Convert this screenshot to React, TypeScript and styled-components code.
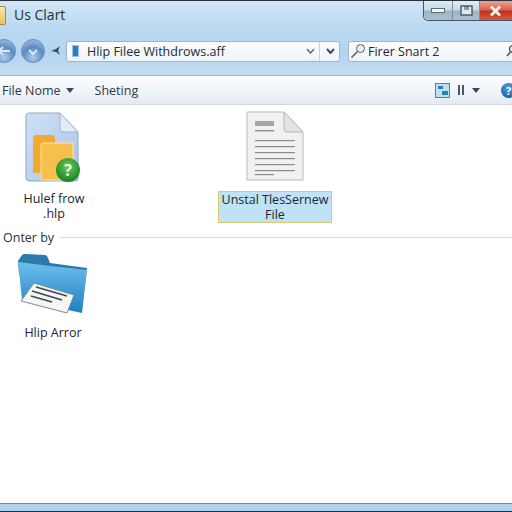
import { createGlobalStyle, styled } from 'styled-components'

const GlobalStyle = createGlobalStyle`
  html, body {
    margin: 0;
    padding: 0;
    height: 100%;
    overflow: hidden;
    background: #fff;
  }
  #root {
    height: 100%;
  }
`

const Win = styled.div`
  width: 512px;
  height: 512px;
  display: flex;
  flex-direction: column;
  overflow: hidden;
  font-family: 'Open Sans', 'Noto Sans', sans-serif;
  color: #1d2530;
  background: #fff;
`

const Frame = styled.div`
  background: linear-gradient(180deg, #d2e5f5 0%, #bcd9f2 35%, #b3d4f1 70%, #c4dcf1 100%);
  border-top: 1px solid #26323b;
  display: flex;
  flex-direction: column;
  box-sizing: border-box;
  height: 75px;
  flex: none;
`

const TitleBar = styled.div`
  height: 37px;
  flex: none;
  display: flex;
  align-items: flex-start;
  justify-content: space-between;
`

const TitleLeft = styled.div`
  display: flex;
  align-items: center;
  gap: 8px;
  height: 27px;
`

const TitleFolder = styled.div`
  width: 5px;
  height: 17px;
  margin-top: 2px;
  background: linear-gradient(180deg, #f6e7a8, #e6c45e);
  border: 1px solid #a58c45;
  border-left: none;
  border-radius: 0 2px 2px 0;
`

const Title = styled.span`
  font-size: 14px;
  color: #26303a;
`

const WinButtons = styled.div`
  display: flex;
  height: 19px;
  border: 1px solid #48565f;
  border-top: none;
  border-right: none;
  border-radius: 0 0 0 5px;
  overflow: hidden;
`

const WinButton = styled.div<{ $w: number; $close?: boolean }>`
  width: ${p => p.$w}px;
  box-sizing: border-box;
  display: flex;
  align-items: center;
  justify-content: center;
  border-right: 1px solid ${p => (p.$close ? 'transparent' : '#7d8f9c')};
  background: ${p =>
    p.$close
      ? 'linear-gradient(180deg, #e9a593 0%, #d9644e 45%, #c3321f 55%, #cf5a3f 100%)'
      : 'linear-gradient(180deg, #e4edf4 0%, #c6d6e3 48%, #9fb4c4 52%, #a9c0d2 100%)'};
`

const NavRow = styled.div`
  height: 26px;
  flex: none;
  display: flex;
  align-items: center;
`

const NavCircle = styled.div<{ $first?: boolean }>`
  width: 24px;
  height: 24px;
  box-sizing: border-box;
  margin-left: ${p => (p.$first ? '-8px' : '5px')};
  border-radius: 50%;
  border: 1px solid #6d8db3;
  flex: none;
  display: flex;
  align-items: center;
  justify-content: center;
  background: radial-gradient(circle at 50% 80%, #a9cdf0 0%, #5a8ac4 50%, #b4cbe4 100%);
`

const HistoryIcon = styled.svg`
  width: 10px;
  height: 10px;
  margin-left: 6px;
  margin-right: 5px;
  flex: none;
`

const Field = styled.div<{ $w: number }>`
  width: ${p => p.$w}px;
  height: 21px;
  flex: none;
  display: flex;
  align-items: center;
  box-sizing: border-box;
  background: linear-gradient(180deg, #fdfefe, #eef4fa);
  border: 1px solid #9fb6ca;
  border-radius: 3px;
  font-size: 12.5px;
  color: #232a33;
`

const AddressIcon = styled.div`
  width: 7px;
  height: 12px;
  box-sizing: border-box;
  margin-left: 5px;
  margin-right: 8px;
  flex: none;
  background: #2d7fc4;
  border: 1px solid #9cc3e3;
`

const FieldText = styled.span`
  flex: 1;
  white-space: nowrap;
`

const Chevron = styled.svg<{ $right: number }>`
  width: 9px;
  height: 6px;
  margin-right: ${p => p.$right}px;
  flex: none;
`

const FieldDivider = styled.div`
  width: 1px;
  height: 19px;
  background: #c4d3e1;
  margin-right: 6px;
`

const SearchField = styled(Field)`
  margin-left: 8px;
  padding-left: 1px;
  gap: 2px;
`

const EndIcon = styled.svg`
  width: 12px;
  height: 14px;
  margin-right: -1px;
  flex: none;
`

const Toolbar = styled.div`
  height: 30px;
  flex: none;
  display: flex;
  align-items: center;
  box-sizing: border-box;
  padding: 0 0 0 2px;
  font-size: 12.5px;
  color: #2f3844;
  border-top: 1px solid #9fb3c4;
  border-bottom: 1px solid #cfd8e2;
  background: linear-gradient(180deg, #fbfcfe 0%, #f1f5fa 50%, #e3eaf3 100%);
`

const ToolItem = styled.span<{ $left?: number }>`
  display: flex;
  align-items: center;
  gap: 5px;
  margin-left: ${p => p.$left ?? 0}px;
`

const Caret = styled.span`
  width: 0;
  height: 0;
  border-left: 4px solid transparent;
  border-right: 4px solid transparent;
  border-top: 5px solid #3b4859;
`

const ToolRight = styled.div`
  margin-left: auto;
  display: flex;
  align-items: center;
`

const ViewIcon = styled.svg`
  width: 15px;
  height: 15px;
`

const Bars = styled.span`
  margin: 0 8px;
  width: 6px;
  height: 10px;
  border-left: 2px solid #4a5868;
  border-right: 2px solid #4a5868;
  box-sizing: border-box;
`

const HelpBadge = styled.span`
  width: 15px;
  height: 15px;
  margin-left: 21px;
  margin-right: -4px;
  border-radius: 50%;
  background: radial-gradient(circle at 50% 30%, #4d9be0, #14569f);
  color: #fff;
  font-size: 11px;
  font-weight: 700;
  display: flex;
  align-items: center;
  justify-content: center;
`

const Content = styled.div`
  flex: 1;
  display: flex;
  flex-direction: column;
  padding-top: 6px;
  background: #fff;
`

const FileRow = styled.div`
  display: flex;
  align-items: flex-start;
`

const FileItem = styled.div<{ $w: number; $left?: number }>`
  width: ${p => p.$w}px;
  margin-left: ${p => p.$left ?? 0}px;
  display: flex;
  flex-direction: column;
  align-items: center;
  font-size: 12.5px;
  line-height: 15px;
  text-align: center;
  color: #20262e;
`

const Icon = styled.svg<{ $h: number }>`
  height: ${p => p.$h}px;
  display: block;
`

const Label = styled.div<{ $selected?: boolean; $top: number }>`
  margin-top: ${p => p.$top}px;
  box-sizing: border-box;
  ${p =>
    p.$selected
      ? `width: 114px;
         padding: 0;
         height: 32px;
         background: #bfe2f6;
         border: 1px solid #d8cb6c;`
      : ''}
`

const GroupHeader = styled.div`
  display: flex;
  align-items: center;
  gap: 5px;
  height: 16px;
  margin-top: 6px;
  padding-left: 3px;
  font-size: 12.5px;
  color: #2a323c;
`

const GroupLine = styled.div`
  flex: 1;
  height: 1px;
  background: #d4d9de;
`

const SecondRow = styled(FileRow)`
  margin-top: 9px;
`

const BottomFrame = styled.div`
  height: 9px;
  flex: none;
  box-sizing: border-box;
  border-top: 1px solid #77899a;
  border-bottom: 1px solid #26323b;
  background: #b2d3ef;
`

const HelpFileIcon = () => (
  <Icon $h={72} viewBox="0 0 58 72" width={58}>
    <defs>
      <linearGradient id="sheet" x1="0" y1="0" x2="1" y2="1">
        <stop offset="0" stopColor="#cfe0f4" />
        <stop offset="1" stopColor="#a9c6e8" />
      </linearGradient>
      <radialGradient id="ball" cx="0.5" cy="0.35" r="0.7">
        <stop offset="0" stopColor="#6ccb54" />
        <stop offset="1" stopColor="#0d7d24" />
      </radialGradient>
    </defs>
    <path d="M1 5 Q1 2 4 2 H35 L53 21 V68 Q53 70 51 70 H4 Q1 70 1 67 Z" fill="url(#sheet)" stroke="#8ea9c9" />
    <path d="M35 2 L53 21 H38 Q35 21 35 18 Z" fill="#e3ebf6" stroke="#9db4d0" />
    <path d="M8 27 Q8 24 11 24 H26 Q30 24 30 28 V62 H8 Z" fill="#f1a92f" />
    <path d="M16 34 Q16 32 18 32 H48 V69 H16 Z" fill="#f7c04d" stroke="#fbe3a8" />
    <circle cx="43" cy="59" r="12" fill="url(#ball)" />
    <text x="43" y="65" fontSize="16" fontWeight="700" fill="#eefbe8" textAnchor="middle">?</text>
  </Icon>
)

const DocIcon = () => (
  <Icon $h={70} viewBox="0 0 58 70" width={58}>
    <path d="M1 1 H38 L57 21 V69 H1 Z" fill="#f1f1f0" stroke="#b9b9b9" />
    <path d="M38 1 L57 21 H41 Q38 21 38 18 Z" fill="#e2e2e2" stroke="#b5b5b5" />
    <rect x="9" y="10" width="19" height="5" fill="#a6a6a6" />
    <rect x="9" y="19" width="19" height="1.4" fill="#8f8f8f" />
    {[29, 35, 41, 47, 53, 59].map(y => (
      <rect key={y} x="9" y={y} width="40" height="1.2" fill="#8a8a8a" />
    ))}
    <rect x="9" y="63" width="19" height="1.2" fill="#8a8a8a" />
  </Icon>
)

const FolderIcon = () => (
  <Icon $h={62} viewBox="0 0 72 62" width={72}>
    <defs>
      <linearGradient id="folderFront" x1="0" y1="0" x2="0" y2="1">
        <stop offset="0" stopColor="#6cc0ec" />
        <stop offset="1" stopColor="#1f7fc2" />
      </linearGradient>
    </defs>
    <path d="M1 7 L5 1 Q6 0 8 0 L28 1 Q30 1 31 4 L33 9 L70 14 L68 30 L2 20 Z" fill="#2c79ae" />
    <path d="M1 8 L33 12 L70 16 L65 59 L5 46 Z" fill="url(#folderFront)" />
    <path d="M17 29 L57 41 L50 59 L4 47 Z" fill="#f5f6f3" stroke="#7d8b94" />
    <path d="M19 33 L50 42 M15 37 L45 46 M14 42 L35 48" stroke="#3f4a52" strokeWidth="1.6" />
  </Icon>
)

export default function App() {
  return (
    <Win>
      <GlobalStyle />
      <Frame>
        <TitleBar>
          <TitleLeft>
            <TitleFolder />
            <Title>Us Clart</Title>
          </TitleLeft>
          <WinButtons>
            <WinButton $w={29}>
              <svg width="14" height="5" viewBox="0 0 14 5">
                <rect x="0.5" y="0.5" width="13" height="4" fill="#f4f7fa" stroke="#5b6d7c" />
              </svg>
            </WinButton>
            <WinButton $w={27}>
              <svg width="13" height="11" viewBox="0 0 13 11">
                <rect x="1" y="1" width="11" height="9" fill="#dfe8ef" stroke="#3e4d5a" strokeWidth="1.3" />
                <rect x="4" y="1" width="5" height="4" fill="#3e4d5a" opacity="0.5" />
              </svg>
            </WinButton>
            <WinButton $w={32} $close>
              <svg width="13" height="12" viewBox="0 0 13 12">
                <path d="M2 1.5 L11 10.5 M11 1.5 L2 10.5" stroke="#f6ece8" strokeWidth="3" />
              </svg>
            </WinButton>
          </WinButtons>
        </TitleBar>
        <NavRow>
          <NavCircle $first>
            <svg width="14" height="10" viewBox="0 0 14 10">
              <path d="M6 1 L2 5 L6 9 M2 5 H13" stroke="#dbe8f6" strokeWidth="2" fill="none" />
            </svg>
          </NavCircle>
          <NavCircle>
            <svg width="14" height="10" viewBox="0 0 14 10">
              <path d="M3 4 L7 8 L11 4" stroke="#dbe8f6" strokeWidth="2" fill="none" />
            </svg>
          </NavCircle>
          <HistoryIcon viewBox="0 0 10 10">
            <path d="M0 5 L5 3 L9 0 L7 5 L9 9 L5 6 Z" fill="#3b4c60" />
          </HistoryIcon>
          <Field $w={274}>
            <AddressIcon />
            <FieldText>Hlip Filee Withdrows.aff</FieldText>
            <Chevron $right={4} viewBox="0 0 9 6">
              <path d="M1 1 L4.5 5 L8 1" stroke="#5a6673" strokeWidth="1.4" fill="none" />
            </Chevron>
            <FieldDivider />
            <Chevron $right={4} viewBox="0 0 9 6">
              <path d="M1 1 L4.5 5 L8 1" stroke="#34506f" strokeWidth="2" fill="none" />
            </Chevron>
          </Field>
          <SearchField $w={170}>
            <svg width="16" height="16" viewBox="0 0 16 16">
              <circle cx="10.5" cy="5.5" r="4" fill="#e8eef5" stroke="#56606b" />
              <path d="M7.5 8.5 L1.5 14.5" stroke="#56606b" strokeWidth="1.6" />
            </svg>
            <FieldText>Firer Snart 2</FieldText>
            <EndIcon viewBox="0 0 12 14">
              <circle cx="7" cy="5" r="3.5" fill="none" stroke="#4a545f" strokeWidth="1.3" />
              <path d="M4.5 8 L1 12" stroke="#4a545f" strokeWidth="1.5" />
            </EndIcon>
          </SearchField>
        </NavRow>
      </Frame>
      <Toolbar>
        <ToolItem>
          File Nome <Caret />
        </ToolItem>
        <ToolItem $left={21}>Sheting</ToolItem>
        <ToolRight>
          <ViewIcon viewBox="0 0 15 15">
            <rect x="0.5" y="0.5" width="14" height="14" fill="#bfe0f4" stroke="#3f87b8" />
            <rect x="3" y="3" width="5" height="3" fill="#2c7fb6" />
            <rect x="7" y="8" width="6" height="4" fill="#2c7fb6" />
          </ViewIcon>
          <Bars />
          <Caret />
          <HelpBadge>?</HelpBadge>
        </ToolRight>
      </Toolbar>
      <Content>
        <FileRow>
          <FileItem $w={108}>
            <HelpFileIcon />
            <Label $top={8}>
              Hulef frow
              <br />
              .hlp
            </Label>
          </FileItem>
          <FileItem $w={114} $left={110}>
            <DocIcon />
            <Label $selected $top={10}>
              Unstal TlesSernew
              <br />
              File
            </Label>
          </FileItem>
        </FileRow>
        <GroupHeader>
          Onter by
          <GroupLine />
        </GroupHeader>
        <SecondRow>
          <FileItem $w={106}>
            <FolderIcon />
            <Label $top={9}>Hlip Arror</Label>
          </FileItem>
        </SecondRow>
      </Content>
      <BottomFrame />
    </Win>
  )
}
